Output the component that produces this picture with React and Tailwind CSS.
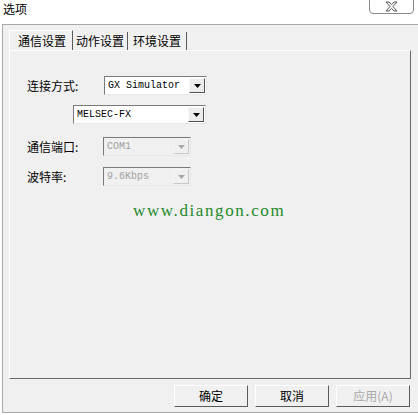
import React from "react";

const cjk = "font-['SimSun','Noto_Sans_CJK_SC',sans-serif]";

function Arrow({ disabled }) {
  return (
    <div
      className={`w-[16px] h-full flex items-center justify-center border-t border-l border-r border-b ${
        disabled
          ? "border-t-[#f4f4f4] border-l-[#f4f4f4] border-r-[#c8c8c8] border-b-[#c8c8c8] bg-[#f0f0f0]"
          : "border-t-[#f8f8f8] border-l-[#f8f8f8] border-r-[#505050] border-b-[#505050] bg-[#ececec]"
      }`}
    >
      <svg width="7" height="4" viewBox="0 0 7 4">
        <polygon points="0,0 7,0 3.5,4" fill={disabled ? "#a8a8a8" : "#000"} />
      </svg>
    </div>
  );
}

function Select({ value, width, disabled }) {
  return (
    <div
      className={`h-[19px] flex items-stretch border border-t-[#7a7a7a] border-l-[#7a7a7a] border-r-[#e8e8e8] border-b-[#e8e8e8] ${
        disabled ? "bg-[#f0f0f0]" : "bg-white"
      }`}
      style={{ width }}
    >
      <div
        className={`flex-1 flex items-center pl-[3px] font-['Liberation_Mono',monospace] text-[10px] ${
          disabled ? "text-[#a0a0a0]" : "text-black"
        }`}
      >
        {value}
      </div>
      <div className="p-[1px]">
        <Arrow disabled={disabled} />
      </div>
    </div>
  );
}

function Button({ children, disabled }) {
  return (
    <button
      className={`w-[74px] h-[22px] bg-[#f0f0f0] border border-t-white border-l-white border-r-[#5a5a5a] border-b-[#5a5a5a] text-[12px] ${cjk} ${
        disabled ? "text-[#a8a8a8]" : "text-black"
      }`}
    >
      {children}
    </button>
  );
}

export default function App() {
  return (
    <div className={`w-[418px] h-[415px] bg-white flex flex-col overflow-hidden ${cjk}`}>
      {/* title bar */}
      <div className="h-[24px] flex justify-between items-start">
        <span className="text-[12px] leading-none pl-[3px] pt-[3px] text-black">选项</span>
        <div className="w-[45px] h-[15px] mr-[4px] -mt-[1px] border border-[#8a8a8a] rounded-b-[4px] bg-white flex items-center justify-center">
          <svg width="13" height="11" viewBox="0 0 13 11">
            <path
              d="M1 1 L4 1 L6.5 3.5 L9 1 L12 1 L8 5.5 L12 10 L9 10 L6.5 7.5 L4 10 L1 10 L5 5.5 Z"
              fill="#f4f4f4"
              stroke="#555"
              strokeWidth="1"
              strokeLinejoin="round"
            />
          </svg>
        </div>
      </div>

      {/* dialog body */}
      <div className="flex-1 ml-[2px] mb-[2px] bg-[#f0f0f0] border-t border-l border-b border-[#a8a8a8] flex flex-col pl-[6px] pr-[7px]">
        {/* tabs */}
        <div className="h-[25px] flex items-end text-[12px] text-black">
          <div className="h-[20px] pl-[8px] pr-[6px] flex items-center border-l border-t border-white border-r border-r-[#5a5a5a]">
            通信设置
          </div>
          <div className="h-[18px] px-[3px] flex items-center border-r border-[#5a5a5a]">动作设置</div>
          <div className="h-[18px] px-[5px] flex items-center border-r border-[#5a5a5a]">环境设置</div>
        </div>

        {/* tab panel */}
        <div className="flex-1 border-t border-l border-white border-r border-b border-r-[#6a6a6a] border-b-[#6a6a6a] pl-[17px] pt-[25px] text-[12px] text-black">
          <div className="flex items-center">
            <span className="w-[77px]">连接方式:</span>
            <Select value="GX Simulator" width={103} />
          </div>
          <div className="flex items-center mt-[10px] ml-[46px]">
            <Select value="MELSEC-FX" width={133} />
          </div>
          <div className="flex items-center mt-[13px]">
            <span className="w-[76px]">通信端口:</span>
            <Select value="COM1" width={88} disabled />
          </div>
          <div className="flex items-center mt-[11px]">
            <span className="w-[76px]">波特率:</span>
            <Select value="9.6Kbps" width={88} disabled />
          </div>
          <div className="mt-[12px] ml-[106px] font-['Liberation_Serif',serif] text-[17px] tracking-[1.6px] text-[#1f8a2a]">
            www.diangon.com
          </div>
        </div>

        {/* buttons */}
        <div className="h-[33px] flex items-center justify-end gap-[7px] pr-[1px]">
          <Button>确定</Button>
          <Button>取消</Button>
          <Button disabled>应用(A)</Button>
        </div>
      </div>
    </div>
  );
}
